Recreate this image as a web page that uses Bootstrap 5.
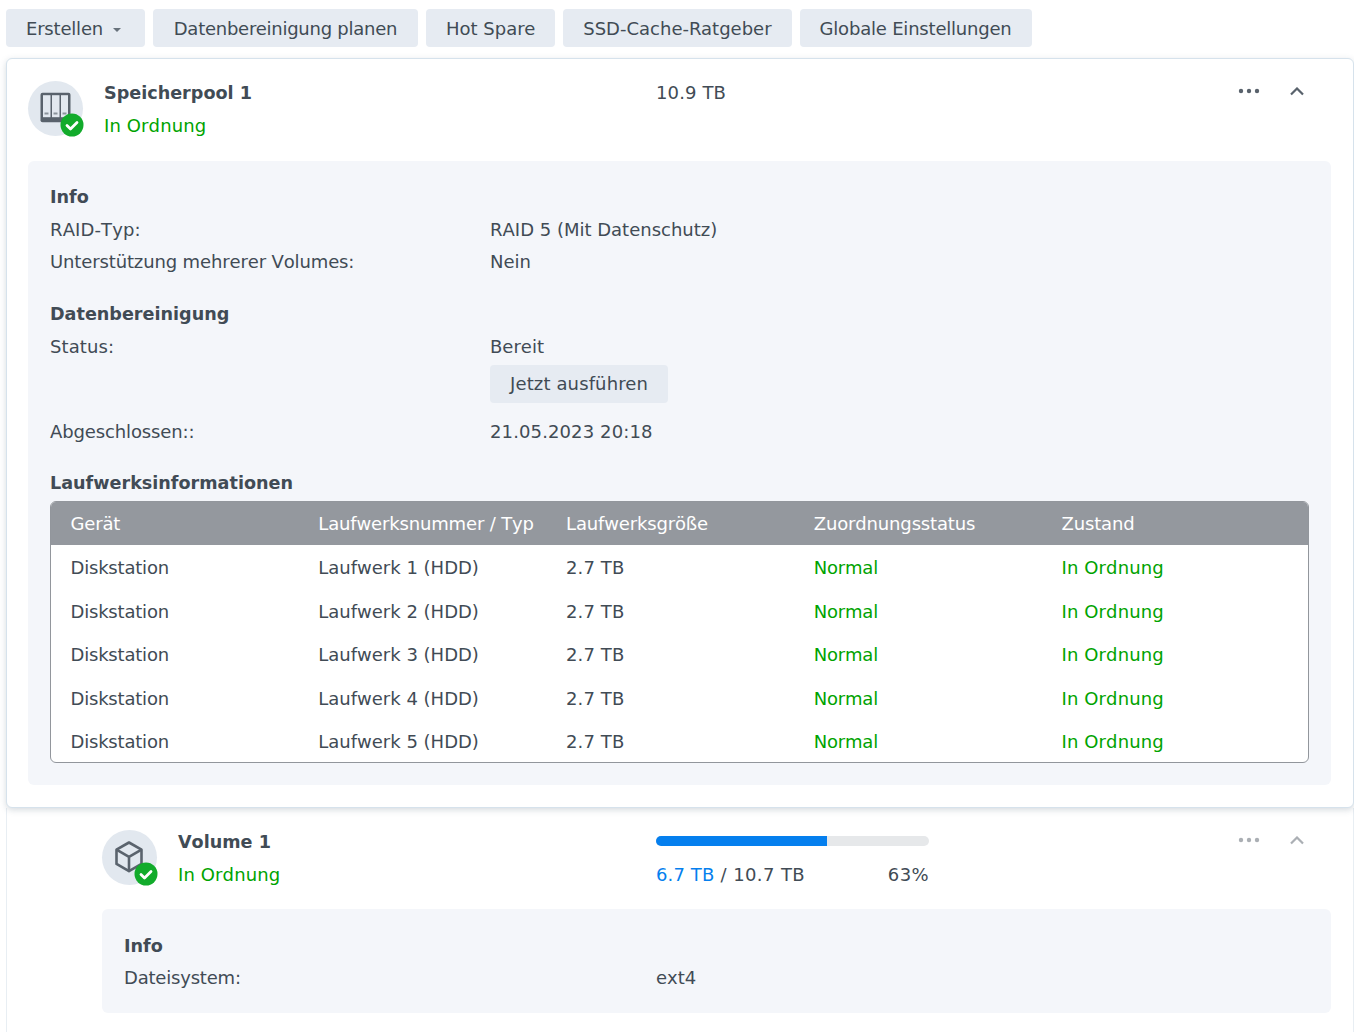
<!DOCTYPE html>
<html lang="de">
<head>
<meta charset="utf-8">
<title>Speichermanager</title>
<link rel="stylesheet" href="https://cdn.jsdelivr.net/npm/bootstrap@5.3.0/dist/css/bootstrap.min.css">
<style>
html,body{height:1032px;overflow:hidden}
body{background:#fff;color:#414b55;font-family:"DejaVu Sans",sans-serif;font-size:18px;line-height:24px;padding:9px 0 0 6px;font-kerning:none;text-rendering:optimizeSpeed}
.sm-toolbar{gap:8px;height:38px;margin-bottom:11px}
.sm-btn{background:#e6ebf2;border:0;border-radius:4px;color:#414b55;font-size:18px;line-height:24px;height:38px;padding:1px 20px 0;flex:none}
.sm-wide{width:265px}
.sm-caret{display:inline-block;border-top:4px solid #67717b;border-left:4px solid transparent;border-right:4px solid transparent;margin-left:10px;margin-right:4px;vertical-align:3px}
.sm-pool{border:1px solid #d6e2ec;border-radius:6px;box-shadow:0 2px 6px rgba(120,135,150,.3);width:1348px;height:750px;padding:22px 22px 0 21px;position:relative;z-index:1;background:#fff}
.sm-head{height:80px}
.sm-icon{width:55px;height:55px;border-radius:50%;background:#e2e8ef;position:relative;flex:none}
.sm-check{position:absolute;right:-1px;bottom:-1px;width:24px;height:24px}
.sm-names{margin-left:21px}
.sm-name{font-weight:700;font-size:17.6px;line-height:24px;margin-bottom:9px}
.sm-ok{color:#00a300;letter-spacing:.12px}
.sm-actions{height:24px;gap:30px;margin-top:-2px;margin-right:27px}
.sm-panel{background:#f4f6fa;border-radius:6px;padding:24px 22px 22px}
.sm-title{font-weight:700;font-size:17.6px;line-height:24px;margin-bottom:8.5px}
.sm-line{line-height:24px;margin-bottom:8.5px}
.sm-key{width:440px;flex:none}
.sm-run{margin:6px 0 17px 0;display:block;letter-spacing:.13px}
.sm-gap{margin-top:28px}
.sm-last{margin-top:27px}
.sm-grid{border:1px solid #92969c;border-radius:6px;overflow:hidden;background:#fff;margin-top:-2.5px;height:262px}
.sm-ln{height:43.5px;align-items:center;padding:4px 0 0 19.5px;display:flex;flex-wrap:nowrap}
.sm-ln>div{width:247.75px;flex:none}
.sm-ghead{background:#94989e;color:#fff;height:43px;padding-top:2px;letter-spacing:-.15px}
.sm-vol{border-left:1px solid #e8eef3;border-right:1px solid #e8eef3;width:1348px;height:230px;padding:22px 22px 0 95px}
.sm-vhead{height:79px}
.sm-usage{position:absolute;left:554px;top:6px;width:273px}
.sm-track{height:10px;background:#e6e8ea;border-radius:5px;overflow:hidden;margin-bottom:17px}
.sm-fill{height:10px;background:#057fee}
.sm-used{color:#057fee}
.sm-size{position:absolute;left:628px;top:0;letter-spacing:.12px}
.sm-headwrap{position:relative}
.sm-faded{opacity:.5}
.sm-vkey{width:532px;flex:none}
.sm-vpanel{padding-top:25px;padding-bottom:23px}
.sm-vpanel .sm-title{margin-bottom:7.5px}
.sm-vpanel .sm-line{margin-bottom:0}
.sm-ls-n3{letter-spacing:-.25px}
.sm-ls-n2{letter-spacing:-.2px}
.sm-ls-n1{letter-spacing:-.13px}
.sm-ls-p1{letter-spacing:.12px}
.sm-ls-p4{letter-spacing:.4px}
.sm-ok.sm-ls-n2{letter-spacing:-.2px}
</style>
</head>
<body>
<div class="d-flex sm-toolbar">
  <button type="button" class="sm-btn"><span class="sm-ls-n2">Erstellen</span><span class="sm-caret"></span></button>
  <button type="button" class="sm-btn sm-wide sm-ls-n3">Datenbereinigung planen</button>
  <button type="button" class="sm-btn">Hot Spare</button>
  <button type="button" class="sm-btn">SSD-Cache-Ratgeber</button>
  <button type="button" class="sm-btn sm-ls-n2">Globale Einstellungen</button>
</div>

<section class="sm-pool">
  <div class="d-flex sm-head sm-headwrap">
    <div class="sm-icon">
      <svg width="55" height="55" viewBox="0 0 55 55" fill="none"><rect x="12.500" y="11.700" width="30" height="29.500" rx="2" fill="#59626c"/><rect x="15" y="14.200" width="7.500" height="22" fill="#e2e8ef"/><rect x="24" y="14.200" width="7.500" height="22" fill="#e2e8ef"/><rect x="33" y="14.200" width="7" height="22" fill="#e2e8ef"/><path d="M16.500 32.500h4M25.500 32.500h4M34.500 32.500h4" stroke="#8b939b" stroke-width="2"/></svg>
      <svg class="sm-check" viewBox="0 0 24 24"><circle cx="12" cy="12" r="11.500" fill="#12ab2b"/><path d="M7 12.500l3.500 3.500 6.500-6.500" fill="none" stroke="#fff" stroke-width="2.800" stroke-linecap="round" stroke-linejoin="round"/></svg>
    </div>
    <div class="sm-names">
      <div class="sm-name">Speicherpool 1</div>
      <div class="sm-ok">In Ordnung</div>
    </div>
    <div class="sm-size">10.9 TB</div>
    <div class="d-flex align-items-center sm-actions ms-auto">
      <svg width="22" height="6" viewBox="0 0 22 6"><g fill="#59626c"><circle cx="3" cy="3" r="2.200"/><circle cx="11" cy="3" r="2.200"/><circle cx="19" cy="3" r="2.200"/></g></svg>
      <svg width="14" height="9" viewBox="0 0 14 9"><path d="M1 7.500l6-6 6 6" fill="none" stroke="#59626c" stroke-width="2.200"/></svg>
    </div>
  </div>

  <div class="sm-panel">
    <div class="sm-title">Info</div>
    <div class="d-flex sm-line"><div class="sm-key sm-ls-p1">RAID-Typ:</div><div>RAID 5 (Mit Datenschutz)</div></div>
    <div class="d-flex sm-line"><div class="sm-key"><span class="sm-ls-n1">Unterstützung mehrerer Volumes:</span></div><div>Nein</div></div>
    <div class="sm-title sm-gap">Datenbereinigung</div>
    <div class="d-flex sm-line mb-0"><div class="sm-key sm-ls-p1">Status:</div><div>Bereit</div></div>
    <div class="d-flex"><div class="sm-key"></div><button type="button" class="sm-btn sm-run">Jetzt ausführen</button></div>
    <div class="d-flex sm-line"><div class="sm-key sm-ls-n1">Abgeschlossen::</div><div class="sm-ls-p1">21.05.2023 20:18</div></div>
    <div class="sm-title sm-last">Laufwerksinformationen</div>
    <div class="sm-grid">
      <div class="sm-ln sm-ghead"><div>Gerät</div><div>Laufwerksnummer / Typ</div><div>Laufwerksgröße</div><div>Zuordnungsstatus</div><div>Zustand</div></div>
      <div class="sm-ln"><div class="sm-ls-n2">Diskstation</div><div>Laufwerk 1 (HDD)</div><div class="sm-ls-p1">2.7 TB</div><div class="sm-ok sm-ls-n2">Normal</div><div class="sm-ok">In Ordnung</div></div>
      <div class="sm-ln"><div class="sm-ls-n2">Diskstation</div><div>Laufwerk 2 (HDD)</div><div class="sm-ls-p1">2.7 TB</div><div class="sm-ok sm-ls-n2">Normal</div><div class="sm-ok">In Ordnung</div></div>
      <div class="sm-ln"><div class="sm-ls-n2">Diskstation</div><div>Laufwerk 3 (HDD)</div><div class="sm-ls-p1">2.7 TB</div><div class="sm-ok sm-ls-n2">Normal</div><div class="sm-ok">In Ordnung</div></div>
      <div class="sm-ln"><div class="sm-ls-n2">Diskstation</div><div>Laufwerk 4 (HDD)</div><div class="sm-ls-p1">2.7 TB</div><div class="sm-ok sm-ls-n2">Normal</div><div class="sm-ok">In Ordnung</div></div>
      <div class="sm-ln"><div class="sm-ls-n2">Diskstation</div><div>Laufwerk 5 (HDD)</div><div class="sm-ls-p1">2.7 TB</div><div class="sm-ok sm-ls-n2">Normal</div><div class="sm-ok">In Ordnung</div></div>
    </div>
  </div>
</section>

<section class="sm-vol">
  <div class="d-flex sm-vhead sm-headwrap">
    <div class="sm-icon">
      <svg width="55" height="55" viewBox="0 0 55 55" fill="none" stroke="#5a636d" stroke-width="2.600" stroke-linejoin="round"><path d="M27 12.500l12.500 7.200v14.200l-12.500 7.200-12.500-7.200v-14.200z"/><path d="M14.500 19.700l12.500 7.200 12.500-7.200M27 26.900v14.200"/></svg>
      <svg class="sm-check" viewBox="0 0 24 24"><circle cx="12" cy="12" r="11.500" fill="#12ab2b"/><path d="M7 12.500l3.500 3.500 6.500-6.500" fill="none" stroke="#fff" stroke-width="2.800" stroke-linecap="round" stroke-linejoin="round"/></svg>
    </div>
    <div class="sm-names">
      <div class="sm-name">Volume 1</div>
      <div class="sm-ok">In Ordnung</div>
    </div>
    <div class="sm-usage">
      <div class="sm-track"><div class="sm-fill" style="width:62.7%"></div></div>
      <div class="d-flex justify-content-between"><div class="sm-ls-p4"><span class="sm-used sm-ls-p1">6.7 TB</span> / 10.7 TB</div><div class="sm-ls-p4">63%</div></div>
    </div>
    <div class="d-flex align-items-center sm-actions ms-auto sm-faded">
      <svg width="22" height="6" viewBox="0 0 22 6"><g fill="#59626c"><circle cx="3" cy="3" r="2.200"/><circle cx="11" cy="3" r="2.200"/><circle cx="19" cy="3" r="2.200"/></g></svg>
      <svg width="14" height="9" viewBox="0 0 14 9"><path d="M1 7.500l6-6 6 6" fill="none" stroke="#59626c" stroke-width="2.200"/></svg>
    </div>
  </div>
  <div class="sm-panel sm-vpanel">
    <div class="sm-title">Info</div>
    <div class="d-flex sm-line"><div class="sm-vkey sm-ls-n2">Dateisystem:</div><div>ext4</div></div>
  </div>
</section>
</body>
</html>
